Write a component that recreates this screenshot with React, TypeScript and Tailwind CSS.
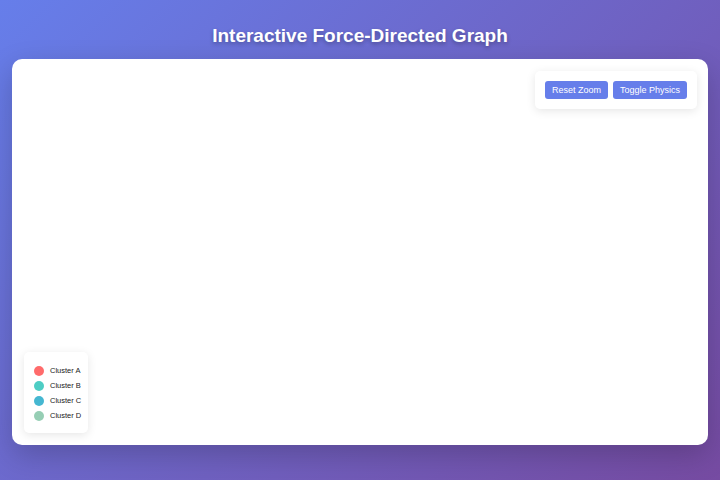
import React from "react";

const clusters = [
  { name: "Cluster A", color: "bg-[#ff6b6b]" },
  { name: "Cluster B", color: "bg-[#4ecdc4]" },
  { name: "Cluster C", color: "bg-[#45b7d1]" },
  { name: "Cluster D", color: "bg-[#96ceb4]" },
];

export default function App() {
  return (
    <div
      className="flex h-[480px] w-[720px] flex-col bg-[linear-gradient(135deg,#667eea_0%,#764ba2_100%)] px-3 pb-[35px] pt-3"
      style={{ fontFamily: '"Liberation Sans", Arial, sans-serif' }}
    >
      {/* Header */}
      <h1 className="pb-[11px] pt-[12px] text-center text-[19px] font-bold leading-[24px] text-white [text-shadow:0_2px_4px_rgba(0,0,0,0.3)]">
        Interactive Force-Directed Graph
      </h1>

      {/* Graph canvas */}
      <div className="relative flex-1 rounded-[10px] bg-white shadow-[0_10px_30px_rgba(0,0,0,0.2)]">
        <div className="absolute right-[11px] top-[12px] flex gap-[5px] rounded-[5px] bg-white p-[10px] shadow-[0_2px_10px_rgba(0,0,0,0.1)]">
          <button className="h-[18px] rounded-[3px] bg-[#667eea] px-[7px] text-[9px] leading-[18px] text-white">
            Reset Zoom
          </button>
          <button className="h-[18px] rounded-[3px] bg-[#667eea] px-[7px] text-[9px] leading-[18px] text-white">
            Toggle Physics
          </button>
        </div>

        <div className="absolute bottom-[12px] left-[12px] flex flex-col gap-[5px] rounded-[5px] bg-white pb-[12px] pl-[10px] pr-[7px] pt-[14px] shadow-[0_2px_10px_rgba(0,0,0,0.1)]">
          {clusters.map((c) => (
            <div key={c.name} className="flex items-center gap-[6px]">
              <span className={`h-[10px] w-[10px] rounded-full ${c.color}`} />
              <span className="text-[7.5px] leading-[10px] text-[#222]">{c.name}</span>
            </div>
          ))}
        </div>
      </div>
    </div>
  );
}
